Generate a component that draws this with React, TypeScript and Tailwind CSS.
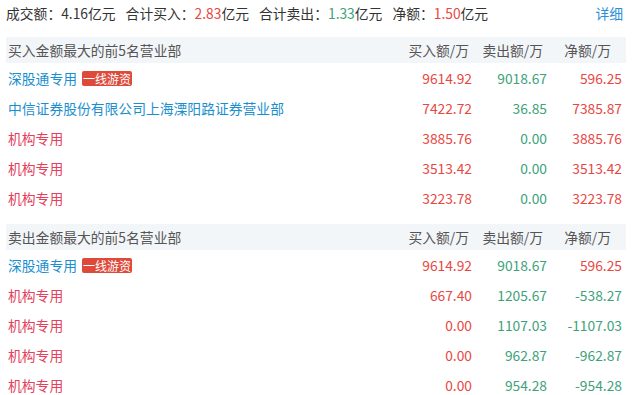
import React from 'react';

type Row = {
  name: string;
  inst?: boolean;
  tag?: string;
  buy: string;
  sell: string;
  net: string;
};

const buyRows: Row[] = [
  { name: '深股通专用', tag: '一线游资', buy: '9614.92', sell: '9018.67', net: '596.25' },
  { name: '中信证券股份有限公司上海溧阳路证券营业部', buy: '7422.72', sell: '36.85', net: '7385.87' },
  { name: '机构专用', inst: true, buy: '3885.76', sell: '0.00', net: '3885.76' },
  { name: '机构专用', inst: true, buy: '3513.42', sell: '0.00', net: '3513.42' },
  { name: '机构专用', inst: true, buy: '3223.78', sell: '0.00', net: '3223.78' },
];

const sellRows: Row[] = [
  { name: '深股通专用', tag: '一线游资', buy: '9614.92', sell: '9018.67', net: '596.25' },
  { name: '机构专用', inst: true, buy: '667.40', sell: '1205.67', net: '-538.27' },
  { name: '机构专用', inst: true, buy: '0.00', sell: '1107.03', net: '-1107.03' },
  { name: '机构专用', inst: true, buy: '0.00', sell: '962.87', net: '-962.87' },
  { name: '机构专用', inst: true, buy: '0.00', sell: '954.28', net: '-954.28' },
];

const RED = 'text-[#e8473f]';
const GREEN = 'text-[#3da27a]';

const Section = ({ title, rows, className }: { title: string; rows: Row[]; className?: string }) => (
  <div className={className}>
    <div className="flex items-center h-[26px] bg-[#f3f6f9] text-[#555]">
      <div className="flex-1 pl-[2px]">{title}</div>
      <div className="w-[75px] text-right pr-[7px] whitespace-nowrap">买入额/万</div>
      <div className="w-[75px] text-right pr-[8px] whitespace-nowrap">卖出额/万</div>
      <div className="w-[75px] text-right pr-[15px] whitespace-nowrap">净额/万</div>
    </div>
    {rows.map((r, i) => (
      <div key={i} className="flex items-center h-[30px]">
        <div className="flex-1 flex items-center pl-[2px]">
          <span className={r.inst ? 'text-[#e5405c]' : 'text-[#1a8fd0]'}>{r.name}</span>
          {r.tag && (
            <span className="ml-[5px] bg-[#dd4a3a] text-white text-[12px] leading-[15px] px-[1px] rounded-[2px]">
              {r.tag}
            </span>
          )}
        </div>
        <div className={`w-[75px] text-right pr-[4px] ${RED}`}>{r.buy}</div>
        <div className={`w-[75px] text-right pr-[4px] ${GREEN}`}>{r.sell}</div>
        <div className={`w-[75px] text-right pr-[4px] ${r.net.startsWith('-') ? GREEN : RED}`}>{r.net}</div>
      </div>
    ))}
  </div>
);

export default function App() {
  return (
    <div
      className="w-[634px] h-[395px] overflow-hidden bg-white text-[13.8px] text-[#333] pl-[6px] pr-[8px]"
      style={{ fontFamily: '"Noto Sans CJK SC", "Noto Sans", sans-serif' }}
    >
      <div className="flex items-center h-[26px]">
        <div className="flex-1 flex items-center">
          <span className="mr-[10px]">成交额：4.16亿元</span>
          <span className="mr-[10px]">
            合计买入：<span className={RED}>2.83</span>亿元
          </span>
          <span className="mr-[10px]">
            合计卖出：<span className={GREEN}>1.33</span>亿元
          </span>
          <span>
            净额：<span className={RED}>1.50</span>亿元
          </span>
        </div>
        <span className="text-[#2b8fd6] pr-[3px]">详细</span>
      </div>
      <Section title="买入金额最大的前5名营业部" rows={buyRows} className="mt-[11px]" />
      <Section title="卖出金额最大的前5名营业部" rows={sellRows} className="mt-[11px]" />
    </div>
  );
}
